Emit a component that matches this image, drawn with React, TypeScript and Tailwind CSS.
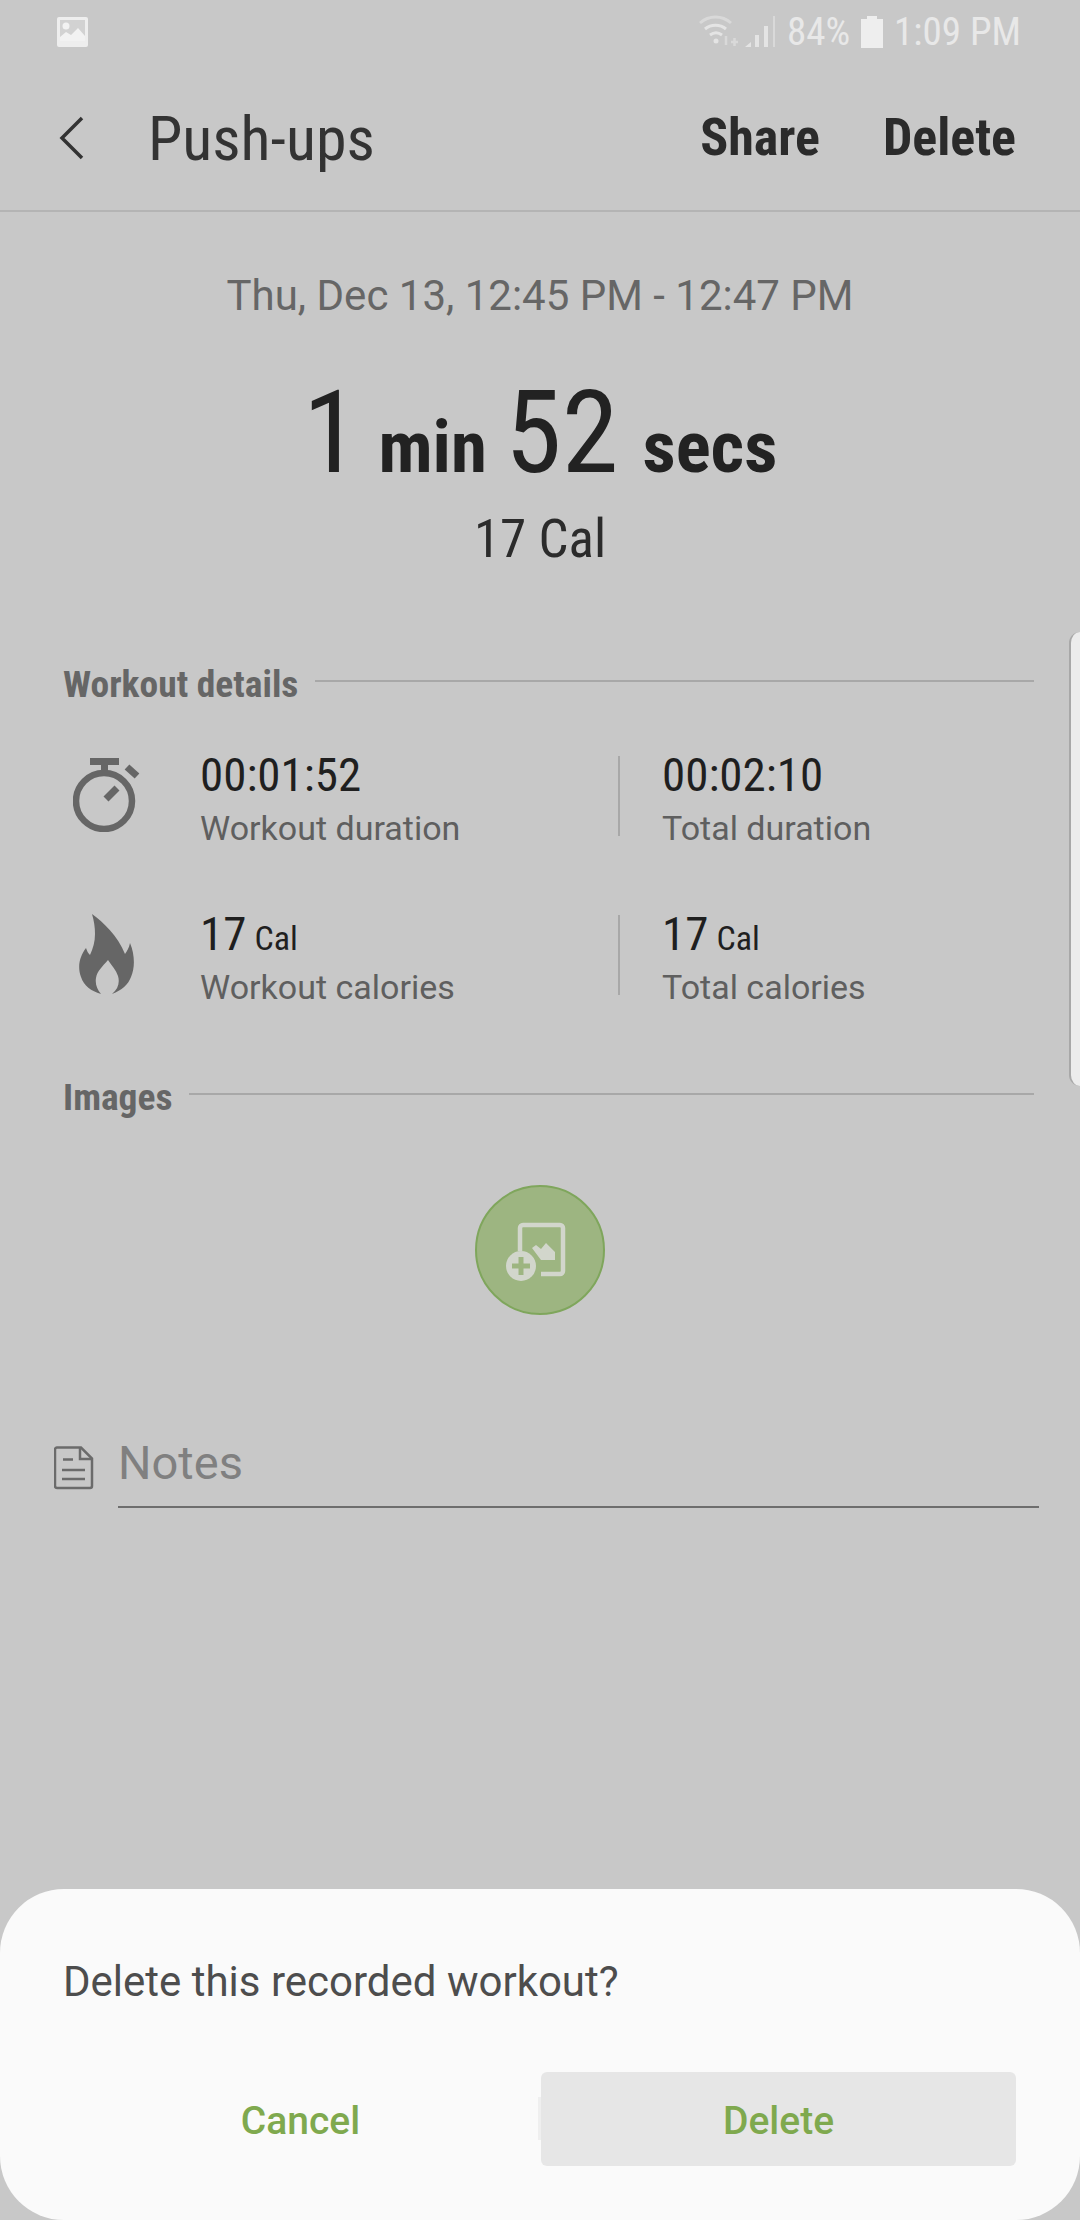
const condensed = 'font-["Roboto_Condensed","Liberation_Sans_Narrow",Roboto,sans-serif] font-stretch-condensed';

const SectionTitle = ({ title }: { title: string }) => (
  <div className="flex items-center gap-[17px]">
    <span className={`${condensed} text-[37.5px] leading-[46px] font-bold text-[#666666]`}>{title}</span>
    <div className="h-[2px] flex-1 bg-[#a8a8a8] -translate-y-[3px]" />
  </div>
);

const Stat = ({ value, unit, label }: { value: string; unit?: string; label: string }) => (
  <div className="flex flex-col">
    <div className={`${condensed} text-[47px] leading-[54px] text-[#1f1f1f]`}>
      {value}
      {unit && <span className="ml-[8px] text-[34px] leading-none">{unit}</span>}
    </div>
    <div className="font-['Roboto',sans-serif] text-[34px] leading-[52px] text-[#5f5f5f]">{label}</div>
  </div>
);

const StatRow = ({ icon, left, right }: { icon: React.ReactNode; left: React.ReactNode; right: React.ReactNode }) => (
  <div className="flex items-center">
    <div className="flex w-[137px] -translate-y-[6px] justify-center pr-[50px]">{icon}</div>
    <div className="w-[418px]">{left}</div>
    <div className="h-[80px] w-[2px] -translate-y-[5px] bg-[#a8a8a8]" />
    <div className="pl-[42px]">{right}</div>
  </div>
);

const Stopwatch = () => (
  <svg width="68" height="74" viewBox="0 0 68 74" fill="none" className="text-[#666666]">
    <circle cx="31" cy="43" r="28" stroke="currentColor" strokeWidth="6.500" />
    <rect x="17" y="0" width="29" height="7" fill="currentColor" />
    <rect x="28" y="6" width="7" height="9" fill="currentColor" />
    <path d="M54 9l10 9" stroke="currentColor" strokeWidth="7" />
    <path d="M33 41l11-11" stroke="currentColor" strokeWidth="7" />
  </svg>
);

const Flame = () => (
  <svg width="56" height="80" viewBox="0 0 56 80" className="text-[#666666]">
    <path
      fill="currentColor"
      d="M13 0C24 8 39 22 46 40c2-3 4-6 5-11 5 12 5 25 1 34-3 8-9 13-19 17 6-5 8-11 6-18-2-6-6-10-10-16-5 6-11 11-12 18-1 6 1 11 5 16C12 77 5 72 2 63c-4-11-1-21 5-29 1 3 2 5 4 7 3-7 5-13 5-21 0-7-1-13-3-20z"
    />
  </svg>
);

const AddImage = () => (
  <svg width="78" height="78" viewBox="0 0 78 78" fill="none" className="text-[#d2d6cc]">
    <path d="M19 40V17a3 3 0 0 1 3-3h37a3 3 0 0 1 3 3v43a3 3 0 0 1-3 3H40" stroke="currentColor" strokeWidth="4.500" />
    <path fill="currentColor" d="M31 37l4-3 5 4 5-6 9 9v8H40z" />
    <circle cx="20" cy="55" r="15" fill="currentColor" />
    <path d="M20 46v18M11 55h18" stroke="#9db581" strokeWidth="5" />
  </svg>
);

const NoteIcon = () => (
  <svg width="40" height="44" viewBox="0 0 40 44" fill="none" stroke="#6b6b6b" strokeWidth="2.5">
    <path d="M3 1.5h24l11 11V40a2 2 0 0 1-2 2H3a2 2 0 0 1-2-2V3.500a2 2 0 0 1 2-2z" />
    <path d="M26 1.5V13h12" />
    <path d="M9 13.5h10M8 24h23M8 33h23" />
  </svg>
);

const Wifi = () => (
  <svg width="42" height="36" viewBox="0 0 42 36" fill="none" stroke="#e4e4e4" strokeWidth="3">
    <path d="M2 9c9-8 22-8 31 0" opacity="0.6" />
    <path d="M7 15c6-5 15-5 21 0" />
    <path d="M12 21c4-3 8-3 12 0" />
    <circle cx="18" cy="27" r="2.5" fill="#e4e4e4" stroke="none" />
    <path d="M28 22v9M33 28h7M36.500 24v8" opacity="0.6" strokeWidth="2.5" />
  </svg>
);

const Signal = () => (
  <svg width="32" height="32" viewBox="0 0 32 32" fill="#e4e4e4">
    <path d="M0 31l6-5v5z" />
    <rect x="10" y="19" width="4" height="12" />
    <rect x="19" y="10" width="4" height="21" />
    <rect x="28" y="0" width="2" height="31" opacity="0.6" />
  </svg>
);

const StatusImage = () => (
  <svg width="31" height="30" viewBox="0 0 31 30">
    <rect width="31" height="30" rx="2" fill="#eeeeee" />
    <rect x="3" y="3" width="25" height="21" fill="#d2d2d2" />
    <circle cx="9" cy="9" r="3.500" fill="#f2f2f2" />
    <path fill="#f2f2f2" d="M3 24v-4l6-5 5 3 7-7 7 8v5z" />
  </svg>
);

export default function App() {
  return (
    <div className="relative flex h-[2220px] w-[1080px] flex-col overflow-hidden bg-[#c8c8c8] font-['Roboto',sans-serif]">
      <div className="flex h-[64px] items-center justify-between pl-[57px] pr-[59px]">
        <StatusImage />
        <div className={`${condensed} flex items-center gap-[5px] text-[39px] text-[#e8e8e8]`}>
          <Wifi />
          <Signal />
          <span className="ml-[5px]">84%</span>
          <svg width="22" height="32" viewBox="0 0 22 32" fill="#eeeeee" className="ml-[6px]">
            <path d="M6 0h10v3h6v29H0V3h6z" />
          </svg>
          <span className="ml-[6px]">1:09 PM</span>
        </div>
      </div>

      <div className="flex h-[148px] items-center border-b-2 border-[#b4b4b4] pl-[58px] pr-[64px] pt-[2px]">
        <svg width="26" height="44" viewBox="0 0 26 44" fill="none" stroke="#333333" strokeWidth="3.500">
          <path d="M24 2L4 22l20 20" />
        </svg>
        <span className={`${condensed} ml-[64px] flex-1 text-[62px] text-[#333333]`}>Push-ups</span>
        <span className={`${condensed} text-[52px] font-bold text-[#2b2b2b]`}>Share</span>
        <span className={`${condensed} ml-[63px] text-[52px] font-bold text-[#2b2b2b]`}>Delete</span>
      </div>

      <div className="mt-[59px] text-center text-[42px] leading-[50px] text-[#666666]">Thu, Dec 13, 12:45 PM - 12:47 PM</div>

      <div className={`${condensed} mt-[47px] flex items-baseline justify-center leading-[130px] text-[#222222]`}>
        <span className="text-[115px]">1</span>
        <span className="ml-[19px] text-[73px] font-bold">min</span>
        <span className="ml-[18px] text-[115px]">52</span>
        <span className="ml-[24px] text-[73px] font-bold">secs</span>
      </div>
      <div className={`${condensed} -mt-[3px] text-center text-[53px] leading-[60px] text-[#2b2b2b]`}>17 Cal</div>

      <div className="mt-[92px] flex flex-col pl-[63px] pr-[46px]">
        <SectionTitle title="Workout details" />
        <div className="mt-[41px] flex flex-col gap-[53px]">
          <StatRow
            icon={<Stopwatch />}
            left={<Stat value="00:01:52" label="Workout duration" />}
            right={<Stat value="00:02:10" label="Total duration" />}
          />
          <StatRow
            icon={<Flame />}
            left={<Stat value="17" unit="Cal" label="Workout calories" />}
            right={<Stat value="17" unit="Cal" label="Total calories" />}
          />
        </div>
        <div className="mt-[61px]">
          <SectionTitle title="Images" />
        </div>
      </div>

      <div className="mt-[65px] flex justify-center">
        <div className="flex h-[130px] w-[130px] items-center justify-center rounded-full border-2 border-[#7fa65c] bg-[#9db581]">
          <AddImage />
        </div>
      </div>

      <div className="mt-[122px] flex items-end pl-[54px] pr-[41px]">
        <div className="pb-[18px]">
          <NoteIcon />
        </div>
        <div className="ml-[24px] flex-1 border-b-2 border-[#6e6e6e] pb-[17px] text-[47px] leading-[52px] text-[#808080]">Notes</div>
      </div>

      <div className="flex-1" />

      <div className="flex h-[331px] flex-col rounded-[64px] bg-[#fafafa] pl-[63px] pr-[64px]">
        <div className="mt-[67px] text-[42px] leading-[52px] text-[#4d4d4d]">Delete this recorded workout?</div>
        <div className="mt-[64px] flex h-[94px] items-stretch">
          <button className="flex w-[476px] items-center justify-center pt-[4px] text-[39px] font-medium text-[#7fa94e]">Cancel</button>
          <button className="relative ml-[3px] flex w-[476px] items-center justify-center rounded-[6px] bg-[#e6e6e6] pt-[4px] text-[39px] font-medium text-[#7fa94e]">
            <span className="absolute -left-[3px] top-[25px] h-[43px] w-[3px] bg-[#efefef]" />
            Delete
          </button>
        </div>
      </div>

      <div className="absolute right-0 top-[632px] h-[454px] w-[11px] rounded-l-[12px] border-l-2 border-[#a8a8a8] bg-[#ececec]" />
    </div>
  );
}
